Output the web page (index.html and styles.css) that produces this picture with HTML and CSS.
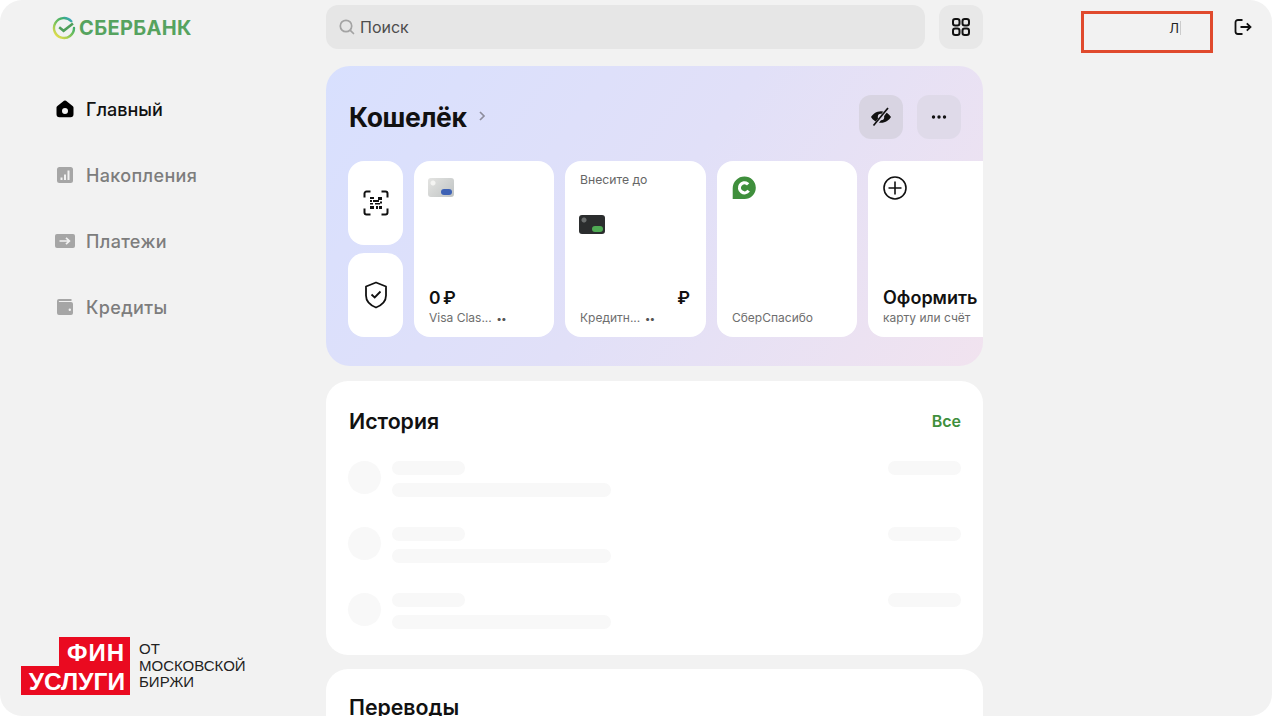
FILE: index.html
```html
<!DOCTYPE html>
<html lang="ru">
<head>
<meta charset="utf-8">
<title>СберБанк</title>
<link rel="stylesheet" href="styles.css">
</head>
<body>
<div class="app">
  <aside class="sidebar">
    <div class="logo">
      <svg class="logo-mark" width="24" height="24" viewBox="0 0 24 24" fill="none">
        <defs>
          <linearGradient id="lg1" x1="4" y1="22" x2="20" y2="2" gradientUnits="userSpaceOnUse">
            <stop offset="0" stop-color="#f2e24a"/><stop offset=".45" stop-color="#7cc35a"/><stop offset=".75" stop-color="#3fae6a"/><stop offset="1" stop-color="#38a3dc"/>
          </linearGradient>
        </defs>
        <path d="M19.300 5.200A10 10 0 1 0 22 12" stroke="url(#lg1)" stroke-width="2.400" stroke-linecap="round"/>
        <path d="M7.200 11.200l4.400 3.600L21 7.400" stroke="#4f9f5a" stroke-width="2.500"/>
      </svg>
      <span class="logo-text">СБЕРБАНК</span>
    </div>
    <nav class="nav">
      <a class="nav-item active">
        <svg width="20" height="20" viewBox="0 0 20 20"><path fill="#000" fill-rule="evenodd" d="M9 1.800a1.600 1.600 0 0 1 2 0l6.600 5.100c.6.400.9 1 .9 1.700v6.600a3 3 0 0 1-3 3h-11a3 3 0 0 1-3-3V8.600c0-.7.3-1.300.9-1.700zM10 9a3 3 0 1 0 0 6 3 3 0 0 0 0-6z"/></svg>
        <span>Главный</span>
      </a>
      <a class="nav-item">
        <svg width="20" height="20" viewBox="0 0 20 20"><rect x="2" y="2" width="16" height="16" rx="2.500" fill="#a6a6a6"/><path fill="#f2f2f2" d="M5.500 12.500h2v2.500h-2zM9 9.500h2V15H9zM12.500 5.500h2V15h-2z"/></svg>
        <span>Накопления</span>
      </a>
      <a class="nav-item">
        <svg width="20" height="20" viewBox="0 0 20 20"><rect x="0" y="3" width="20" height="14" rx="2" fill="#a6a6a6"/><path fill="none" stroke="#f2f2f2" stroke-width="1.700" d="M4.500 10h10M11 6.800l3.400 3.200-3.400 3.200"/></svg>
        <span>Платежи</span>
      </a>
      <a class="nav-item">
        <svg width="20" height="20" viewBox="0 0 20 20"><path fill="#a6a6a6" fill-rule="evenodd" d="M4 2h12.500v2H4.200c-.6 0-.6 1 0 1H16a2 2 0 0 1 2 2v9a2 2 0 0 1-2 2H4a2 2 0 0 1-2-2V4a2 2 0 0 1 2-2zm10.800 9.500a1.200 1.200 0 1 0 0 2.400 1.200 1.200 0 0 0 0-2.400z"/></svg>
        <span>Кредиты</span>
      </a>
    </nav>
    <div class="fin">
      <div class="fin-logo">
        <span class="fin-top">ФИН</span>
        <span class="fin-bottom">УСЛУГИ</span>
      </div>
      <div class="fin-note">ОТ<br>МОСКОВСКОЙ<br>БИРЖИ</div>
    </div>
  </aside>

  <main class="main">
    <div class="topbar">
      <div class="search">
        <svg width="18" height="18" viewBox="0 0 18 18" fill="none"><circle cx="8" cy="8" r="5.700" stroke="#a3a3a3" stroke-width="1.700"/><path d="M12.300 12.300l3.200 3.200" stroke="#a3a3a3" stroke-width="1.700" stroke-linecap="round"/></svg>
        <span>Поиск</span>
      </div>
      <button class="apps">
        <svg width="20" height="20" viewBox="0 0 20 20" fill="none" stroke="#111" stroke-width="2"><rect x="2" y="2" width="6.500" height="6.500" rx="2.200"/><rect x="11.500" y="2" width="6.500" height="6.500" rx="2.200"/><rect x="2" y="11.500" width="6.500" height="6.500" rx="2.200"/><rect x="11.500" y="11.500" width="6.500" height="6.500" rx="2.200"/></svg>
      </button>
    </div>

    <section class="wallet">
      <header class="wallet-head">
        <div class="wallet-title">
          <h1>Кошелёк</h1>
          <svg width="10" height="12" viewBox="0 0 10 12" fill="none"><path d="M3 2l4 4-4 4" stroke="#8d8d9c" stroke-width="1.700"/></svg>
        </div>
        <div class="wallet-actions">
          <button class="round-btn dark">
            <svg width="24" height="24" viewBox="0 0 24 24"><path fill="#111" fill-rule="evenodd" d="M12 6.200c4.700 0 8.300 2.900 10 5.800-1.700 2.900-5.300 5.800-10 5.800S3.700 14.900 2 12c1.700-2.900 5.300-5.800 10-5.800zm0 2.600a3.200 3.200 0 1 0 0 6.400 3.200 3.200 0 0 0 0-6.400z"/><path d="M5 21.500L19.500 2.500" stroke="#d8d4e2" stroke-width="3.400"/><path d="M4.500 20.500L19 3" stroke="#111" stroke-width="1.700"/></svg>
          </button>
          <button class="round-btn">
            <svg width="16" height="6" viewBox="0 0 16 6" fill="#111"><circle cx="2.500" cy="3" r="1.700"/><circle cx="8" cy="3" r="1.700"/><circle cx="13.500" cy="3" r="1.700"/></svg>
          </button>
        </div>
      </header>
      <div class="cards">
        <div class="mini-col">
          <div class="mini">
            <svg width="26" height="26" viewBox="0 0 26 26" fill="none"><path d="M1.500 7.500v-4a2 2 0 0 1 2-2h4M18.500 1.500h4a2 2 0 0 1 2 2v4M24.500 18.500v4a2 2 0 0 1-2 2h-4M7.500 24.500h-4a2 2 0 0 1-2-2v-4" stroke="#111" stroke-width="2"/><path fill="#111" d="M7 7h4v2H7zM15 7h4v3h-4zM7 10h2v2H7zM10 10h6v2h-6zM12 13h5v1.500h-5zM7 13h3v1.500H7zM17 11.500h2v2h-2zM7 16h4v3H7zM13 16h2v3h-2zM16 16h3v3h-3z"/></svg>
          </div>
          <div class="mini">
            <svg width="24" height="28" viewBox="0 0 24 28" fill="none"><path d="M12 1.500l10 4v9c0 5.500-4.500 9.800-10 12-5.500-2.200-10-6.500-10-12v-9z" stroke="#111" stroke-width="1.800" stroke-linejoin="round"/><path d="M7.500 13.500l3.200 3 5.800-6" stroke="#111" stroke-width="1.800"/></svg>
          </div>
        </div>

        <article class="card">
          <div class="card-thumb silver"><i></i></div>
          <div class="card-foot">
            <div class="amount">0 ₽</div>
            <div class="card-sub"><span>Visa Clas...</span><b class="dots">••</b></div>
          </div>
        </article>

        <article class="card wide">
          <div class="card-note">Внесите до</div>
          <div class="card-thumb black"><i></i></div>
          <div class="card-foot">
            <div class="amount end">₽</div>
            <div class="card-sub"><span>Кредитн...</span><b class="dots">••</b></div>
          </div>
        </article>

        <article class="card">
          <svg class="spasibo" width="24" height="24" viewBox="0 0 24 24"><path fill="#3f8f3c" d="M12.500 0.500a11.300 11.300 0 0 1 0 22.600H0.700V12.300A11.800 11.800 0 0 1 12.500 0.500z"/><circle cx="12.500" cy="11.800" r="5" fill="none" stroke="#fff" stroke-width="3.200" stroke-dasharray="24 7" transform="rotate(35 12.500 11.800)"/></svg>
          <div class="card-foot">
            <div class="card-sub"><span>СберСпасибо</span></div>
          </div>
        </article>

        <article class="card last">
          <svg width="24" height="24" viewBox="0 0 24 24" fill="none" stroke="#111" stroke-width="1.600"><circle cx="12" cy="12" r="11"/><path d="M12 5.500v13M5.500 12h13"/></svg>
          <div class="card-foot">
            <div class="amount">Оформить</div>
            <div class="card-sub"><span>карту или счёт</span></div>
          </div>
        </article>
      </div>
    </section>

    <section class="panel history">
      <header class="panel-head">
        <h2>История</h2>
        <a class="all">Все</a>
      </header>
      <div class="row"><i class="sk-circle"></i><div class="sk-lines"><i class="sk short"></i><i class="sk long"></i></div><i class="sk amount-sk"></i></div>
      <div class="row"><i class="sk-circle"></i><div class="sk-lines"><i class="sk short"></i><i class="sk long"></i></div><i class="sk amount-sk"></i></div>
      <div class="row"><i class="sk-circle"></i><div class="sk-lines"><i class="sk short"></i><i class="sk long"></i></div><i class="sk amount-sk"></i></div>
    </section>

    <section class="panel transfers">
      <h2>Переводы</h2>
    </section>
  </main>

  <div class="right">
    <div class="user"><span>Л</span></div>
    <svg class="logout" width="20" height="20" viewBox="0 0 20 20" fill="none" stroke="#111" stroke-width="1.800"><path d="M9.500 3H5a2.500 2.500 0 0 0-2.500 2.500v9A2.500 2.500 0 0 0 5 17h4.500"/><path d="M7.500 10h10M13.800 6.300l3.700 3.700-3.700 3.700"/></svg>
  </div>
</div>
</body>
</html>
```

FILE: styles.css
```css
* { box-sizing: border-box; }
html, body { margin: 0; height: 716px; overflow: hidden; background: #fff; }
body { font-family: Inter, "Noto Sans", sans-serif; color: #111; }
h1, h2 { margin: 0; }
button { border: 0; padding: 0; font: inherit; display: flex; align-items: center; justify-content: center; }
i { display: block; }

.app {
  display: flex;
  width: 1272px;
  height: 716px;
  background: #f2f2f2;
  border-radius: 22px;
  overflow: hidden;
}

/* sidebar */
.sidebar {
  width: 326px;
  flex: none;
  display: flex;
  flex-direction: column;
  padding: 16px 0 21px 21px;
}
.logo { display: flex; align-items: center; gap: 3px; margin-left: 31px; height: 24px; }
.logo-text { font-size: 20px; font-weight: 700; color: #56a35f; letter-spacing: .35px; line-height: 24px; }
.nav { display: flex; flex-direction: column; gap: 46px; margin: 59px 0 0 34px; }
.nav-item { display: flex; align-items: center; gap: 11px; height: 20px; font-size: 18px; font-weight: 500; color: #7d7d7d; letter-spacing: .35px; }
.nav-item.active { color: #111; letter-spacing: 0; }

.fin { margin-top: auto; display: flex; align-items: flex-start; gap: 9px; }
.fin-logo { width: 109px; height: 58px; flex: none; display: flex; flex-direction: column; align-items: flex-end; font-family: "Liberation Sans", Arial, sans-serif; font-weight: 700; color: #fff; background: linear-gradient(#ea0a20, #ea0a20) right top / 71px 29px no-repeat, linear-gradient(#ea0a20, #ea0a20) left bottom / 109px 29px no-repeat; }
.fin-top { font-size: 24px; line-height: 32px; padding-right: 5px; letter-spacing: 1px; }
.fin-bottom { font-size: 24.500px; line-height: 25px; padding-right: 5px; }
.fin-note { font-family: "Liberation Sans", Arial, sans-serif; font-size: 15px; line-height: 16.500px; color: #222; padding-top: 4px; }

/* main */
.main { width: 657px; flex: none; padding-top: 5px; display: flex; flex-direction: column; }
.topbar { display: flex; gap: 14px; margin-bottom: 17px; }
.search { flex: 1; height: 44px; background: #e6e6e6; border-radius: 12px; display: flex; align-items: center; gap: 4px; padding-left: 12px; font-size: 16px; color: #4d4d4d; }
.apps { width: 44px; height: 44px; border-radius: 12px; background: #e8e8e8; }

.wallet {
  height: 300px;
  flex: none;
  border-radius: 24px;
  background: linear-gradient(125deg, #d8e0fe 0%, #e1e0f8 50%, #f1e3ef 100%);
  padding: 29px 0 0 22px;
  overflow: hidden;
}
.wallet-head { display: flex; justify-content: space-between; align-items: center; padding-right: 22px; height: 44px; margin-bottom: 22px; }
.wallet-title { display: flex; align-items: center; gap: 10px; padding-left: 1px; }
.wallet-title svg { margin-top: -2px; }
h1 { font-size: 26.500px; font-weight: 700; letter-spacing: -.35px; line-height: 44px; }
.wallet-actions { display: flex; gap: 14px; }
.round-btn { width: 44px; height: 44px; border-radius: 12px; background: #dfdae9; }
.round-btn.dark { background: #d8d4e2; }

.cards { display: flex; gap: 11px; height: 176px; width: 660px; }
.mini-col { width: 55px; flex: none; display: flex; flex-direction: column; gap: 8px; }
.mini { flex: 1; background: #fff; border-radius: 16px; display: flex; align-items: center; justify-content: center; }
.card { width: 140px; flex: none; background: #fff; border-radius: 16px; padding: 15px 15px 11px; display: flex; flex-direction: column; }
.card.wide { width: 141px; }
.card-note { font-size: 12.200px; line-height: 14px; color: #666; margin-top: -3px; margin-bottom: 28px; }
.card-thumb { width: 26px; height: 19px; border-radius: 3px; position: relative; margin: 2px 0 0 -1px; }
.card-thumb i { position: absolute; right: 2px; bottom: 2px; width: 11px; height: 6px; border-radius: 3px; }
.card-thumb.silver { background: radial-gradient(circle at 5px 5px, #f4f4f2 0 2px, transparent 3px), linear-gradient(135deg, #e4e4e2, #bfc3c3); }
.card-thumb.silver i { background: #3e62b5; }
.card-thumb.black { background: radial-gradient(circle at 5px 5px, #6a6d6d 0 2px, transparent 3px), #2b2d2e; margin-top: 0; }
.card-thumb.black i { background: #4faa54; }
.spasibo { display: block; }
.card-foot { margin-top: auto; }
.amount { font-size: 17.500px; font-weight: 600; line-height: 24px; margin-bottom: 0; white-space: nowrap; word-spacing: -2px; }
.amount.end { text-align: right; padding-right: 1px; }
.last .amount { font-size: 18px; }
.card-sub { display: flex; align-items: center; gap: 5px; font-size: 12px; line-height: 16px; color: #6e6e6e; white-space: nowrap; }
.dots { font-size: 10px; color: #555; }

/* panels */
.panel { background: #fff; border-radius: 22px; flex: none; padding: 0 22px; }
.panel h2 { padding-left: 1px; }
.history { height: 274px; margin-top: 15px; margin-bottom: 14px; }
.panel-head { display: flex; justify-content: space-between; align-items: center; height: 38px; padding-top: 21px; box-sizing: content-box; margin-bottom: 21px; }
h2 { font-size: 21.300px; font-weight: 600; line-height: 38px; }
.all { font-size: 16px; font-weight: 600; color: #3f8f3c; }
.row { display: flex; align-items: flex-start; height: 66px; }
.sk-circle { width: 33px; height: 33px; border-radius: 50%; background: #f8f8f8; flex: none; margin-right: 11px; }
.sk-lines { flex: 1; display: flex; flex-direction: column; gap: 8px; }
.sk { background: #f8f8f8; border-radius: 7px; height: 14px; }
.short { width: 73px; }
.long { width: 219px; }
.amount-sk { width: 73px; flex: none; }
.transfers { height: 120px; padding-top: 19px; }

/* right */
.right { flex: 1; display: flex; align-items: flex-start; padding: 11px 0 0 98px; }
.user { width: 132px; height: 42px; border: 3px solid #e04a2d; display: flex; align-items: center; justify-content: flex-end; padding: 0 29px 9px 0; font-size: 13px; color: #222; }
.user span { border-right: 1px solid #ccc; padding-right: 1px; line-height: 14px; }
.logout { margin: 6px 0 0 20px; }
```
